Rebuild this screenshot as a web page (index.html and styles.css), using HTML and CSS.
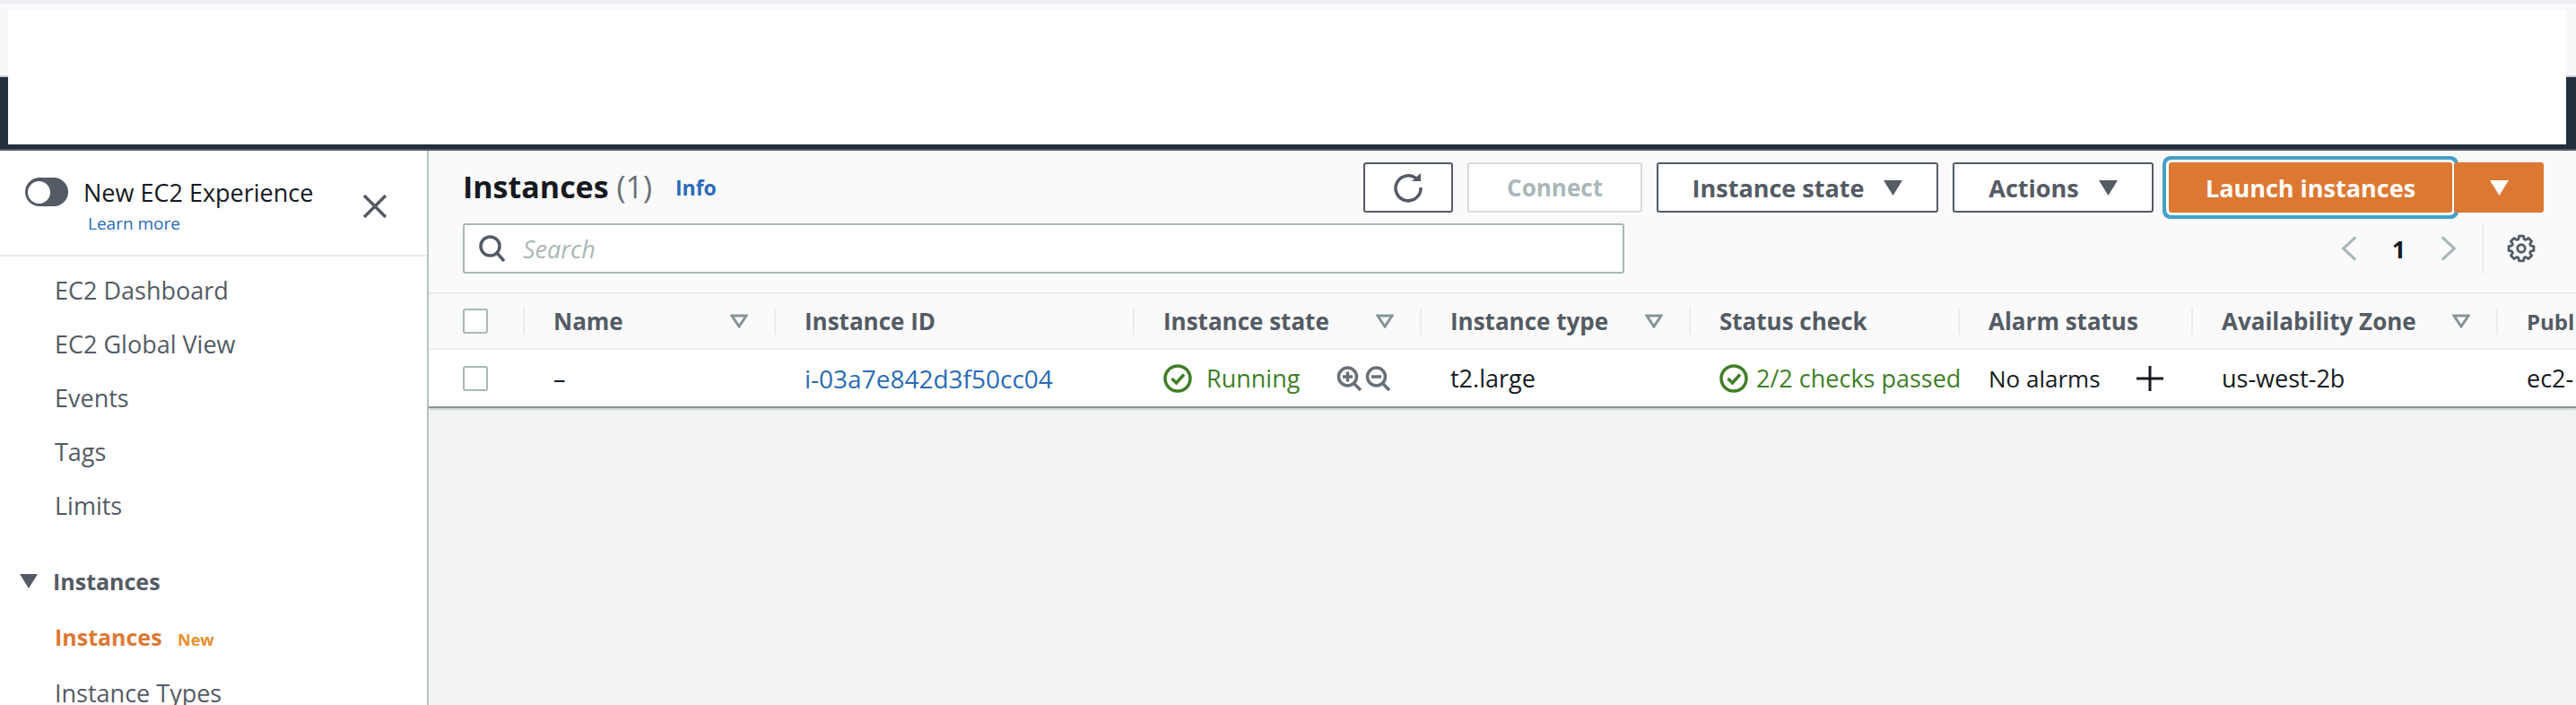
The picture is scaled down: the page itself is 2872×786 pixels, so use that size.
FILE: index.html
```html
<!DOCTYPE html>
<html>

<head>
    <title>Instances | EC2</title>
    <link rel="stylesheet" href="styles.css">
</head>

<body>
    <div class="browser-line"></div>
    <div class="browser-bar"></div>
    <div class="console-nav"></div>
    <div class="redacted"></div>

    <div class="page">
        <aside class="sidebar">
            <div class="side-head">
                <span class="toggle"><span class="knob"></span></span>
                <div class="side-title">
                    <div class="experience">New EC2 Experience</div>
                    <a class="learn">Learn more</a>
                </div>
                <svg class="close" viewBox="0 0 28 26">
                    <path d="M2 1 L26 25 M26 1 L2 25" />
                </svg>
            </div>
            <ul class="side-list">
                <li>EC2 Dashboard</li>
                <li>EC2 Global View</li>
                <li>Events</li>
                <li>Tags</li>
                <li>Limits</li>
            </ul>
            <div class="side-section">
                <svg class="section-caret" viewBox="0 0 20 16">
                    <path d="M0 0 H20 L10 16 Z" />
                </svg>
                Instances
            </div>
            <ul class="side-list sub">
                <li class="current">Instances <span class="new">New</span></li>
                <li>Instance Types</li>
            </ul>
        </aside>

        <main class="main">
            <div class="tools">
                <div class="tools-row">
                    <h1>Instances <span class="count">(1)</span></h1>
                    <a class="info">Info</a>
                    <button class="btn refresh">
                        <svg class="refresh-icon" viewBox="0 0 34 34">
                            <path d="M27 8 A14 14 0 1 0 31 17" />
                            <path class="solid" d="M21 10 H31 V1 Z" />
                        </svg>
                    </button>
                    <button class="btn connect">Connect</button>
                    <button class="btn state">Instance state <svg class="caret" viewBox="0 0 21 17"><path d="M0 0 H21 L10.5 17 Z" /></svg></button>
                    <button class="btn actions">Actions <svg class="caret" viewBox="0 0 21 17"><path d="M0 0 H21 L10.5 17 Z" /></svg></button>
                    <button class="btn launch">Launch instances</button>
                    <button class="btn launch-more"><svg class="caret" viewBox="0 0 21 17"><path d="M0 0 H21 L10.5 17 Z" /></svg></button>
                </div>
                <div class="tools-row second">
                    <div class="search">
                        <svg class="search-icon" viewBox="0 0 30 30">
                            <circle cx="12.5" cy="12.5" r="10.5" />
                            <path d="M20 20 L28 29" />
                        </svg>
                        <span class="placeholder">Search</span>
                    </div>
                    <div class="pager">
                        <svg class="chevron" viewBox="0 0 20 30"><path d="M18 1 L3 15 L18 29" /></svg>
                        <span class="page-num">1</span>
                        <svg class="chevron" viewBox="0 0 20 30"><path d="M2 1 L17 15 L2 29" /></svg>
                        <span class="pager-line"></span>
                        <svg class="gear" viewBox="-17 -17 34 34">
                            <polygon points="2.6,-14.8 3.4,-11 5.4,-10.2 8.6,-12.3 12.3,-8.6 10.2,-5.4 11,-3.4 14.8,-2.6 14.8,2.6 11,3.4 10.2,5.4 12.3,8.6 8.6,12.3 5.4,10.2 3.4,11 2.6,14.8 -2.6,14.8 -3.4,11 -5.4,10.2 -8.6,12.3 -12.3,8.6 -10.2,5.4 -11,3.4 -14.8,2.6 -14.8,-2.6 -11,-3.4 -10.2,-5.4 -12.3,-8.6 -8.6,-12.3 -5.4,-10.2 -3.4,-11 -2.6,-14.8" />
                            <circle r="4.5" />
                        </svg>
                    </div>
                </div>
            </div>

            <div class="table head-row">
                <div class="cell first"><span class="check"></span></div>
                <div class="cell"><span class="sep"></span>Name<svg class="sort" viewBox="0 0 20 16"><path d="M2 2 H18 L10 14 Z" /></svg></div>
                <div class="cell"><span class="sep"></span>Instance ID</div>
                <div class="cell"><span class="sep"></span>Instance state<svg class="sort" viewBox="0 0 20 16"><path d="M2 2 H18 L10 14 Z" /></svg></div>
                <div class="cell"><span class="sep"></span>Instance type<svg class="sort" viewBox="0 0 20 16"><path d="M2 2 H18 L10 14 Z" /></svg></div>
                <div class="cell"><span class="sep"></span>Status check</div>
                <div class="cell"><span class="sep"></span>Alarm status</div>
                <div class="cell"><span class="sep"></span>Availability Zone<svg class="sort" viewBox="0 0 20 16"><path d="M2 2 H18 L10 14 Z" /></svg></div>
                <div class="cell last"><span class="sep"></span>Publ</div>
            </div>

            <div class="table body-row">
                <div class="cell first"><span class="check"></span></div>
                <div class="cell">–</div>
                <div class="cell"><a class="link">i-03a7e842d3f50cc04</a></div>
                <div class="cell ok">
                    <svg class="ok-icon wide" viewBox="0 0 32 32">
                        <circle cx="16" cy="16" r="14" />
                        <path d="M9.5 16 L14.5 21 L23 11.5" />
                    </svg>
                    <span class="running">Running</span>
                    <svg class="zoom-icon first-zoom" viewBox="0 0 30 28">
                        <circle cx="12.5" cy="12" r="10" />
                        <path d="M19.5 19.5 L27 27" />
                        <path class="inner" d="M7 12 H18 M12.5 6.5 V17.5" />
                    </svg>
                    <svg class="zoom-icon" viewBox="0 0 30 28">
                        <circle cx="12.5" cy="12" r="10" />
                        <path d="M19.5 19.5 L27 27" />
                        <path class="inner" d="M7 12 H18" />
                    </svg>
                </div>
                <div class="cell">t2.large</div>
                <div class="cell ok">
                    <svg class="ok-icon" viewBox="0 0 32 32">
                        <circle cx="16" cy="16" r="14" />
                        <path d="M9.5 16 L14.5 21 L23 11.5" />
                    </svg>
                    <span>2/2 checks passed</span>
                </div>
                <div class="cell">
                    <span class="alarms">No alarms</span>
                    <svg class="plus" viewBox="0 0 30 28"><path d="M15 0 V28 M0 14 H30" /></svg>
                </div>
                <div class="cell">us-west-2b</div>
                <div class="cell">ec2-</div>
            </div>
        </main>
    </div>
</body>

</html>
```

FILE: styles.css
```css
* {
    box-sizing: border-box;
}

html,
body {
    margin: 0;
    height: 786px;
    overflow: hidden;
}

body {
    font-family: "Open Sans", "Noto Sans", sans-serif;
    font-size: 27px;
    color: #16191f;
    background-color: #f2f3f3;
}

ul {
    list-style: none;
    margin: 0;
    padding: 0;
}

svg {
    display: block;
    flex: none;
    fill: none;
}

.browser-line {
    height: 4px;
    background-color: #eeeef3;
}

.browser-bar {
    height: 82px;
    background-color: #f8f8fb;
    border-bottom: 2px solid #cfd0d3;
}

.console-nav {
    height: 82px;
    background-color: #232f3e;
    border-bottom: 2px solid #545b64;
}

/* blanked out part of the screenshot */
.redacted {
    position: absolute;
    left: 9px;
    top: 11px;
    width: 2852px;
    height: 150px;
    background-color: #fff;
}

.page {
    display: flex;
    height: 618px;
}

/* sidebar */
.sidebar {
    flex: none;
    width: 478px;
    background-color: #fff;
    border-right: 2px solid #b8c2c3;
}

.side-head {
    display: flex;
    height: 118px;
    padding: 30px 44px 0 28px;
    border-bottom: 2px solid #eaeded;
}

.toggle {
    display: flex;
    align-items: center;
    flex: none;
    width: 48px;
    height: 32px;
    padding-left: 3px;
    border-radius: 16px;
    background-color: #545b64;
}

.knob {
    width: 25px;
    height: 25px;
    border-radius: 50%;
    background-color: #fff;
}

.side-title {
    margin-left: 17px;
}

.experience {
    line-height: 34px;
}

.learn {
    display: block;
    margin: 4px 0 0 5px;
    font-size: 19px;
    line-height: 26px;
    color: #2a6bb8;
}

.close {
    width: 28px;
    height: 26px;
    margin: 19px 0 0 auto;
    stroke: #545b64;
    stroke-width: 3.5;
}

.side-list {
    padding-top: 8px;
}

.side-list li {
    height: 60px;
    padding-left: 61px;
    line-height: 60px;
    color: #545b64;
}

.side-list.sub {
    padding-top: 2px;
}

.side-list.sub li {
    margin-bottom: 3px;
}

.side-list .current {
    font-size: 25px;
    font-weight: 700;
    color: #dd7833;
}

.new {
    margin-left: 11px;
    font-size: 18px;
    color: #ec8f2e;
}

.side-section {
    display: flex;
    align-items: center;
    height: 60px;
    margin-top: 24px;
    padding-left: 22px;
    font-size: 25px;
    font-weight: 700;
    color: #545b64;
}

.section-caret {
    width: 20px;
    height: 16px;
    margin-right: 17px;
    fill: #545b64;
}

/* main area */
.main {
    flex: 1;
    min-width: 0;
    overflow: hidden;
}

.tools {
    height: 160px;
    padding: 13px 36px 0 38px;
    background-color: #fafafa;
    border-bottom: 2px solid #eaeded;
}

.tools-row {
    display: flex;
    align-items: center;
    height: 56px;
}

.tools-row.second {
    margin-top: 12px;
}

h1 {
    margin: -2px 0 0;
    font-size: 34px;
    font-weight: 700;
}

.count {
    font-weight: 400;
    color: #687078;
}

.info {
    margin-left: 26px;
    font-size: 23px;
    font-weight: 700;
    color: #2a6bb8;
}

.btn {
    display: flex;
    align-items: center;
    justify-content: center;
    gap: 22px;
    height: 56px;
    padding: 0;
    font-family: inherit;
    font-size: 27px;
    font-weight: 700;
    color: #545b64;
    background-color: #fff;
    border: 2px solid #545b64;
    border-radius: 3px;
}

.refresh {
    width: 100px;
    margin-left: auto;
}

.refresh-icon {
    width: 34px;
    height: 34px;
    stroke: #545b64;
    stroke-width: 3.5;
}

.refresh-icon .solid {
    fill: #545b64;
    stroke: none;
}

.connect {
    width: 195px;
    margin-left: 16px;
    font-size: 26px;
    color: #aab7b8;
    border-color: #d5dbdb;
}

.state {
    width: 314px;
    margin-left: 16px;
}

.actions {
    width: 224px;
    margin-left: 16px;
}

.caret {
    width: 21px;
    height: 17px;
    fill: #545b64;
}

.launch {
    width: 316px;
    margin-left: 17px;
    color: #fff;
    background-color: #dd7833;
    border-color: #dd7833;
    box-shadow: 0 0 0 3px #fff, 0 0 0 7px #44a0c9;
}

.launch-more {
    position: relative;
    width: 100px;
    margin-left: 2px;
    background-color: #dd7833;
    border-color: #dd7833;
}

.launch-more .caret {
    fill: #fff;
}

.search {
    display: flex;
    align-items: center;
    width: 1295px;
    height: 56px;
    padding-left: 16px;
    background-color: #fff;
    border: 2px solid #aab7b8;
    border-radius: 3px;
}

.search-icon {
    width: 30px;
    height: 30px;
    stroke: #545b64;
    stroke-width: 3.5;
}

.placeholder {
    margin-left: 19px;
    font-style: italic;
    color: #aab7b8;
}

.pager {
    display: flex;
    align-items: center;
    margin-left: auto;
    padding-right: 9px;
}

.chevron {
    width: 18px;
    height: 30px;
    stroke: #aab7b8;
    stroke-width: 3.5;
}

.page-num {
    width: 93px;
    text-align: center;
    font-weight: 700;
}

.pager-line {
    width: 2px;
    height: 56px;
    margin: 0 26px 0 28px;
    background-color: #eaeded;
}

.gear {
    width: 32px;
    height: 32px;
    stroke: #545b64;
    stroke-width: 3;
    stroke-linejoin: round;
}

/* table */
.table {
    display: grid;
    grid-template-columns: 105px 280px 400px 320px 300px 300px 260px 340px 89px;
}

.cell {
    display: flex;
    align-items: center;
    min-width: 0;
    white-space: nowrap;
}

.first {
    padding-left: 38px;
}

.head-row {
    height: 62px;
    font-size: 26px;
    font-weight: 700;
    color: #545b64;
    background-color: #fafafa;
    border-bottom: 2px solid #eaeded;
}

.last {
    font-size: 24px;
}

.body-row {
    height: 65px;
    background-color: #fff;
    border-bottom: 2px solid #879596;
    box-shadow: 0 2px 2px rgba(0, 28, 36, 0.15);
}

.body-row .cell {
    padding-left: 34px;
}

.body-row .first {
    padding-left: 38px;
}

.check {
    width: 28px;
    height: 28px;
    background-color: #fff;
    border: 2px solid #aab7b8;
    border-radius: 3px;
}

.sep {
    flex: none;
    width: 2px;
    height: 30px;
    margin-right: 32px;
    background-color: #eaeded;
}

.sort {
    width: 20px;
    height: 16px;
    margin: 0 29px 0 auto;
    stroke: #879596;
    stroke-width: 3;
}

.link {
    font-size: 28px;
    color: #2a6bb8;
}

.ok {
    color: #3f7f27;
}

.ok-icon {
    width: 32px;
    height: 32px;
    margin-right: 9px;
    stroke: #3f7f27;
    stroke-width: 3.5;
}

.ok-icon.wide {
    margin-right: 16px;
}

.running {
    flex: none;
    width: 145px;
}

.alarms {
    flex: none;
    width: 165px;
    font-size: 26px;
}

.zoom-icon {
    width: 30px;
    height: 28px;
    margin-right: 2px;
    stroke: #687078;
    stroke-width: 3.5;
}

.plus {
    width: 30px;
    height: 28px;
    stroke: #16191f;
    stroke-width: 3;
}
```
